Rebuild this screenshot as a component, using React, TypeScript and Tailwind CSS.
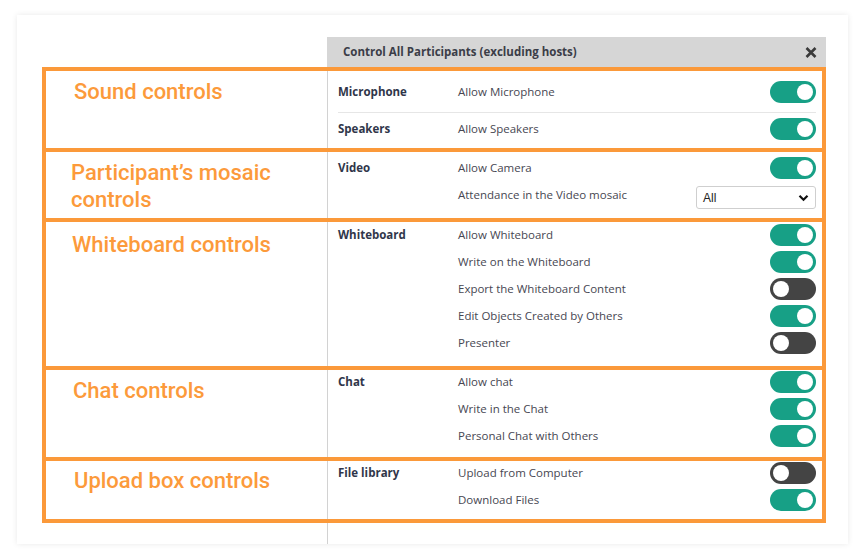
import React from 'react'

const ORANGE = 'border-[#fb993a]'

type Opt = { label: string; on?: boolean }

function Toggle({ on }: { on: boolean }) {
  return (
    <div
      className={`relative w-[46px] h-[22px] rounded-full ${on ? 'bg-[#17a086]' : 'bg-[#444444]'}`}
    >
      <div
        className={`absolute top-[3px] w-[16px] h-[16px] rounded-full bg-white ${on ? 'right-[3px]' : 'left-[3px]'}`}
      />
    </div>
  )
}

function FakeSelect() {
  return (
    <div className="mt-[1px] w-[120px] h-[23px] border border-[#cfcfcf] rounded-[3px] bg-white flex items-center justify-between pl-[6px] pr-[6px]">
      <span className="text-[12px] text-[#222] font-['Liberation_Sans',sans-serif]">All</span>
      <svg width="11" height="8" viewBox="0 0 11 8">
        <path d="M1.5 1.8 L5.5 5.8 L9.5 1.8" fill="none" stroke="#111" strokeWidth="2.2" />
      </svg>
    </div>
  )
}

function Rows({ category, opts, shift }: { category: string; opts: Opt[]; shift: string }) {
  return (
    <div className={shift}>
      {opts.map((o, i) => (
        <div key={o.label} className="grid grid-cols-[120px_1fr_auto] items-center h-[27px]">
          <span className="font-bold text-[#30364a]">{i === 0 ? category : ''}</span>
          <span className="text-[#474752]">{o.label}</span>
          <Toggle on={!!o.on} />
        </div>
      ))}
    </div>
  )
}

function Section({
  label,
  height,
  labelPad,
  first,
  children,
}: {
  label: string
  height: string
  labelPad: string
  first?: boolean
  children: React.ReactNode
}) {
  return (
    <div className={`flex border-x-4 border-b-4 ${first ? 'border-t-4' : ''} ${ORANGE} ${height}`}>
      <div className={`w-[281px] shrink-0 pr-[20px] ${labelPad}`}>
        <div className="font-['Roboto',sans-serif] font-medium text-[22px] leading-[27px] text-[#fc9a3b]">
          {label}
        </div>
      </div>
      <div className="flex-1 border-l border-[#d2d2d2] pl-[10px] pr-[6px] overflow-hidden">{children}</div>
    </div>
  )
}

export default function App() {
  return (
    <div className="min-h-screen bg-white pt-[15px] pl-[17px] font-['Open_Sans',sans-serif] text-[11.5px]">
      <div className="w-[831px] h-[529px] bg-white shadow-[0_0_6px_rgba(0,0,0,0.09)] pt-[22px]">
        <div className="ml-[310px] w-[499px] h-[30px] bg-[#d6d6d6] flex items-center justify-between pl-[16px] pr-[9px]">
          <span className="font-bold text-[#3b3d48]">Control All Participants (excluding hosts)</span>
          <svg width="12" height="11" viewBox="0 0 12 11">
            <path d="M1.5 1 L10.5 10 M10.5 1 L1.5 10" stroke="#3a3a3a" strokeWidth="2.6" />
          </svg>
        </div>

        <div className="ml-[25px] w-[784px]">
          <Section label="Sound controls" height="h-[85px]" labelPad="pl-[28px] pt-[7px]" first>
            <div className="grid grid-cols-[120px_1fr_auto] items-center h-[42px] border-b border-[#e6e6e6]">
              <span className="font-bold text-[#30364a]">Microphone</span>
              <span className="text-[#474752]">Allow Microphone</span>
              <Toggle on />
            </div>
            <div className="grid grid-cols-[120px_1fr_auto] items-center h-[32px]">
              <span className="font-bold text-[#30364a]">Speakers</span>
              <span className="text-[#474752]">Allow Speakers</span>
              <Toggle on />
            </div>
          </Section>

          <Section label="Participant’s mosaic controls" height="h-[70px]" labelPad="pl-[25px] pt-[7px]">
            <div className="pt-[5px]">
              <div className="grid grid-cols-[120px_1fr_auto] items-center h-[22px]">
                <span className="font-bold text-[#30364a]">Video</span>
                <span className="text-[#474752]">Allow Camera</span>
                <Toggle on />
              </div>
              <div className="grid grid-cols-[120px_1fr_auto] items-start mt-[6px]">
                <span />
                <span className="text-[#474752] leading-[20px]">Attendance in the Video mosaic</span>
                <FakeSelect />
              </div>
            </div>
          </Section>

          <Section label="Whiteboard controls" height="h-[148px]" labelPad="pl-[26px] pt-[9px]">
            <Rows
              shift="-mt-[1px]"
              category="Whiteboard"
              opts={[
                { label: 'Allow Whiteboard', on: true },
                { label: 'Write on the Whiteboard', on: true },
                { label: 'Export the Whiteboard Content', on: false },
                { label: 'Edit Objects Created by Others', on: true },
                { label: 'Presenter', on: false },
              ]}
            />
          </Section>

          <Section label="Chat controls" height="h-[91px]" labelPad="pl-[27px] pt-[7px]">
            <Rows
              shift="-mt-[2px]"
              category="Chat"
              opts={[
                { label: 'Allow chat', on: true },
                { label: 'Write in the Chat', on: true },
                { label: 'Personal Chat with Others', on: true },
              ]}
            />
          </Section>

          <Section label="Upload box controls" height="h-[62px]" labelPad="pl-[28px] pt-[6px]">
            <Rows
              shift="-mt-[2px]"
              category="File library"
              opts={[
                { label: 'Upload from Computer', on: false },
                { label: 'Download Files', on: true },
              ]}
            />
          </Section>
        </div>

        <div className="ml-[310px] h-[21px] border-l border-[#d2d2d2]" />
      </div>
    </div>
  )
}
